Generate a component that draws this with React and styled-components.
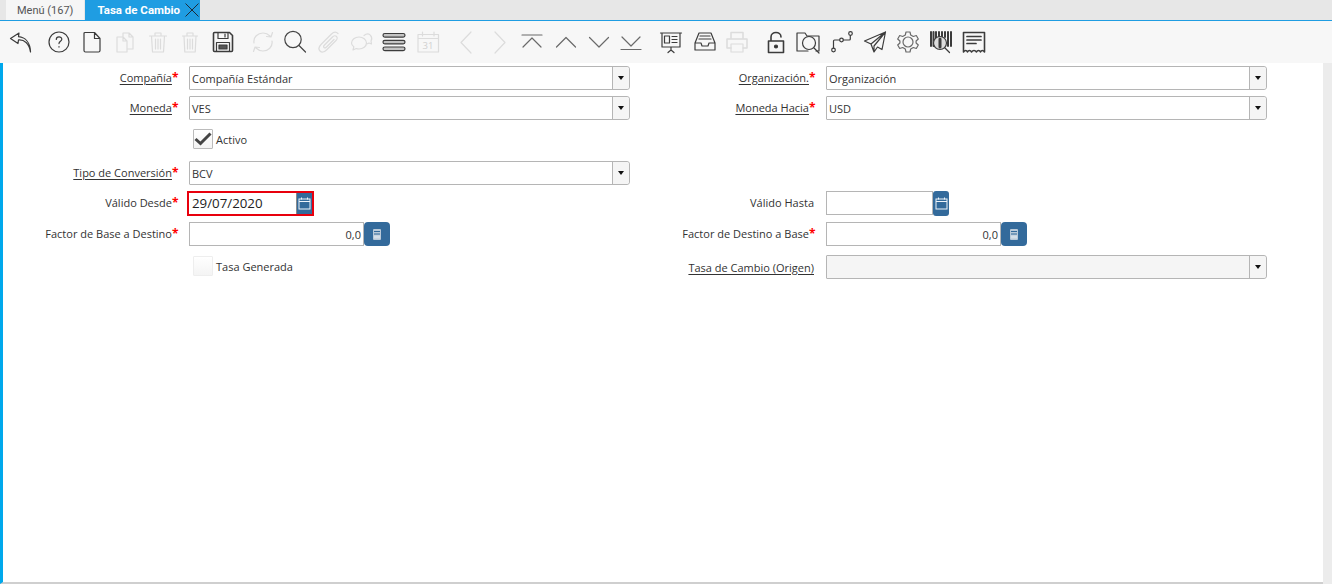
import styled, { createGlobalStyle } from 'styled-components';

const GlobalStyle = createGlobalStyle`
  html, body {
    margin: 0;
    height: 100%;
    background: #fff;
    overflow: hidden;
  }
  #root {
    height: 100%;
  }
`;

const Page = styled.div`
  width: 1332px;
  height: 584px;
  display: flex;
  flex-direction: column;
  font-family: 'Open Sans', 'Noto Sans', sans-serif;
  font-size: 11px;
  color: #333;
`;

const TabBar = styled.div`
  height: 20px;
  padding-left: 6px;
  display: flex;
  gap: 1px;
  background: #e7e7e7;
  border-bottom: 1px solid #1f9de2;
`;

const Tab = styled.div`
  height: 20px;
  display: flex;
  align-items: center;
  font-family: 'Roboto', sans-serif;
  font-size: ${props => (props.$active ? '11.5px' : '11px')};
  background: ${props => (props.$active ? '#1f9de2' : '#f6f6f6')};
  color: ${props => (props.$active ? '#fff' : '#555')};
  font-weight: ${props => (props.$active ? 700 : 400)};
  padding: ${props => (props.$active ? '0 0 0 12px' : '0 11px')};
`;

const CloseIcon = styled.svg`
  width: 16px;
  height: 16px;
  margin-left: 4px;
  fill: none;
  stroke: #1d2b38;
  stroke-width: 1;
`;

const Toolbar = styled.div`
  height: 42px;
  display: flex;
  align-items: center;
  padding-left: 9px;
  background: #f7f7f7;
`;

const ToolButton = styled.svg`
  width: 24px;
  height: 24px;
  flex: none;
  margin-left: ${props => props.$gap}px;
  fill: none;
  stroke: ${props => (props.$tone === 'off' ? '#dcdcdc' : props.$tone === 'nav' ? '#6a6a6a' : '#3c3c3c')};
  stroke-width: 1.2;
  stroke-linecap: round;
  stroke-linejoin: round;
`;

const Main = styled.div`
  flex: 1;
  display: flex;
`;

const Content = styled.div`
  flex: 1;
  border-left: 3px solid #00a8ec;
  border-bottom: 2px solid #cfcfcf;
  padding-top: 3px;
`;

const ScrollTrack = styled.div`
  width: 9px;
  background: #ececec;
`;

const Form = styled.div`
  display: grid;
  grid-template-columns: 174px 441px 172px 441px;
  grid-template-rows: 24px 24px 29px 24px 25px 24px 27px;
  gap: 6px 12px;
`;

const Label = styled.label`
  display: flex;
  justify-content: flex-end;
  align-items: center;
  height: 24px;
  align-self: ${props => (props.$end ? 'end' : 'start')};
  grid-column: ${props => props.$col};
  white-space: nowrap;
  line-height: 24px;
  padding: ${props => (props.$end ? '1px 0 0' : '0 0 1px')};
  box-sizing: border-box;

  span {
    text-decoration: ${props => (props.$link ? 'underline' : 'none')};
    text-underline-offset: 2px;
  }

  b {
    color: #f00;
    font-weight: 700;
    font-size: 12px;
    margin: 0 -1.5px 0 0;
  }
`;

const Combo = styled.div`
  height: 24px;
  box-sizing: border-box;
  display: flex;
  grid-column: ${props => props.$col};
  align-self: ${props => (props.$end ? 'end' : 'start')};
  background: ${props => (props.$off ? '#f5f5f5' : '#fff')};
  border: 1px solid #b5b5b5;
  border-radius: 1px 3px 3px 1px;
`;

const ComboValue = styled.div`
  flex: 1;
  padding-left: 2px;
  line-height: 23px;
`;

const ComboArrow = styled.div`
  width: 16px;
  background: #f5f5f5;
  border-left: 1px solid #b5b5b5;
  border-radius: 0 3px 3px 0;
  display: flex;
  align-items: center;
  justify-content: center;

  &::after {
    content: '';
    border-left: 3.5px solid transparent;
    border-right: 3.5px solid transparent;
    border-top: 4px solid #111;
  }
`;

const CheckField = styled.div`
  grid-column: 2;
  align-self: ${props => (props.$end ? 'end' : 'start')};
  margin: ${props => (props.$end ? '0 0 3px' : '3px 0 0')};
  padding-left: 4px;
  display: flex;
  align-items: center;
  gap: 3px;
  height: 20px;
`;

const CheckBox = styled.div`
  width: 20px;
  height: 20px;
  box-sizing: border-box;
  display: flex;
  align-items: center;
  justify-content: center;
  background: linear-gradient(#fff, #f4f4f4);
  border: 1px solid ${props => (props.$checked ? '#bbb' : '#eee')};
  border-radius: 1px;
`;

const FieldGroup = styled.div`
  grid-column: ${props => props.$col};
  display: flex;
`;

const Input = styled.div`
  box-sizing: border-box;
  height: 24px;
  width: ${props => props.$width}px;
  padding: 0 2px;
  line-height: 23px;
  text-align: ${props => (props.$right ? 'right' : 'left')};
  background: #fff;
  border: 1px solid #b5b5b5;
`;

const DateFrame = styled.div`
  box-sizing: border-box;
  width: 127px;
  height: 25px;
  margin-left: -2px;
  display: flex;
  border: 2px solid #e8000d;
`;

const DateText = styled.div`
  flex: 1;
  padding-left: 3px;
  font-size: 13.3px;
  line-height: 21px;
  color: #222;
`;

const FieldButton = styled.div`
  flex: none;
  width: ${props => props.$width}px;
  background: #336a9b;
  border-left: ${props => (props.$width < 16 ? '1px solid #8a8a8a' : 'none')};
  border-radius: ${props => props.$radius}px;
  display: flex;
  align-items: center;
  justify-content: center;
`;

const CalendarGlyph = () => (
  <svg width="13" height="13" viewBox="0 0 13 13" fill="none" stroke="#eef4fa" strokeWidth="1">
    <rect x="1" y="2" width="11" height="10" />
    <path d="M1 4.5h11M3.5 .5v2M9.5 .5v2" />
  </svg>
);

const CalculatorGlyph = () => (
  <svg width="12" height="13" viewBox="0 0 12 13">
    <rect x="2" y="1" width="8" height="11" rx="1" fill="#b9c9d8" />
    <path d="M3 3.5h6M3 6h6" stroke="#336a9b" strokeWidth="1" />
    <rect x="3" y="7.5" width="6" height="3" fill="#d5dfe8" />
  </svg>
);

const toolIcons = [
  { gap: 0, tone: 'on', d: <path d="M10 3 1.5 8.5 9 13.5l.5-3.6c5.5-.6 10.8 3.4 12 12.1-.2-9.5-5.2-14.6-12-15.3z" /> },
  { gap: 14, tone: 'on', d: <><circle cx="12" cy="12" r="10" /><path d="M9.3 9.5c0-3.4 5.5-3.4 5.5-.2 0 2-2.8 2.1-2.8 4.3M12 16.5v.6" /></> },
  { gap: 9, tone: 'on', d: <path d="M5 2.5h9.5l5.5 6v12a1.5 1.5 0 0 1-1.5 1.5H5.5A1.5 1.5 0 0 1 4 20.500v-17a1 1 0 0 1 1-1zM14.500 2.500v6H20" /> },
  { gap: 9, tone: 'off', d: <path d="M10 6.500V3h6l4 4v12h-5M16 3v4h4M4 7h6l4 4v11H4zM10 7v4h4" /> },
  { gap: 9, tone: 'off', d: <path d="M3.500 6h17M9 6V3h6v3M5.500 6l1 16h11l1-16M9.500 9v10M12 9v10M14.500 9v10" /> },
  { gap: 8, tone: 'off', d: <path d="M4.500 6h15M9 6V3h6v3M6 6l.8 16h10.400L18 6M9.500 9v10M12 9v10M14.500 9v10" /> },
  { gap: 9, tone: 'on', d: <><path d="M3.500 2.500h15l3 3v15a1 1 0 0 1-1 1h-17a1 1 0 0 1-1-1v-17a1 1 0 0 1 1-1z" strokeWidth="1.600" /><path d="M7 2.500v6h10v-6M14 4v3M5.500 21.500v-9h13v9" /><path d="M8 15h8v4H8z" fill="#555" /></> },
  { gap: 16, tone: 'off', d: <path d="M3 13C2 7 7 3 12 3c3 0 5 1 7 3M21.500 2.500 20 7l-4.500-.5M21 11c1 6-4 10-9 10-3 0-5-1-7-3M2.500 21.500 4 17l4.500.5" /> },
  { gap: 8, tone: 'nav', d: <><circle cx="10" cy="9.500" r="8.200" stroke="#444" /><path d="m16 15.500 6.500 6.500" stroke="#444" /></> },
  { gap: 10, tone: 'off', d: <path d="M21 3.500c-2-2-4.500-1.500-6.500.5L4 14.500c-2.500 2.500-2.500 5-1 6.500s4 1.500 6.500-1L19 10.500c1.500-1.500 1.500-3 .5-4s-2.500-1-4 .5L7.500 15c-1 1-1 2-.5 2.500s1.500.5 2.500-.5L17 9.500" /> },
  { gap: 9, tone: 'off', d: <path d="M14 5.500C20 1 23 8 21 11l.5 3-2.500-1c-1 .8-2 1-3 1M9 7c4 0 7.500 2.500 7.500 6s-3.500 6-7.500 6c-1 0-2-.2-2.800-.5L3 20l.8-3.200C2.500 15.800 1.500 14.500 1.500 13c0-3.500 3.500-6 7.500-6z" /> },
  { gap: 8, tone: 'on', d: <><rect x="1" y="3.500" width="22" height="3.600" rx="1.800" fill="#c4c4c4" /><rect x="1" y="10.300" width="22" height="3.600" rx="1.800" fill="#c4c4c4" /><rect x="1" y="17" width="22" height="3.600" rx="1.800" fill="#c4c4c4" /></> },
  { gap: 10, tone: 'off', d: <><path d="M2 4.500h20.500V22H2zM2 8.500h20.500M6.500 2v4M18 2v4" /><text x="12" y="19" fontSize="9.500" textAnchor="middle" fill="#d0d0d0" stroke="none" fontFamily="Open Sans">31</text></> },
  { gap: 15, tone: 'off', d: <path d="M16 2 6 12.500 16 23" /> },
  { gap: 8, tone: 'off', d: <path d="M8 2l10 10.500L8 23" /> },
  { gap: 9, tone: 'nav', d: <path d="M2 5h20M3 17 12 8l9 9" /> },
  { gap: 10, tone: 'nav', d: <path d="M2.500 17 12 7.500l9.500 9.500" /> },
  { gap: 9, tone: 'nav', d: <path d="M2.500 7.500 12 17l9.500-9.500" /> },
  { gap: 8, tone: 'nav', d: <path d="M3 7l9 9 9-9M2 19.500h20" /> },
  { gap: 16, tone: 'on', d: <><path d="M1.500 3h21M3 3h18v14H3zM5.500 6h5v7h-5zM13 6.500h5M13 9.500h5M13 12.500h5M12 17v3M12 20l-3 2.500M12 20l3 2.500" /></> },
  { gap: 10, tone: 'on', d: <path d="M6 3h12l4 10v7H2v-7zM2 13h6l1 3h6l1-3h6M7 6h10M6 9h12" /> },
  { gap: 8, tone: 'off', d: <><path d="M6 9V2.500h12V9M6 18H2V9h20v9h-4" strokeWidth="1.500" /><path d="M6 14h12v8H6z" /></> },
  { gap: 15, tone: 'on', d: <><path d="M7 11V7c0-6 10-6 10 0M4.500 11h15v11.500h-15z" strokeWidth="1.600" /><circle cx="12" cy="16.500" r="1.500" fill="#333" /></> },
  { gap: 8, tone: 'on', d: <><path d="M1 21V3h8l2 3h12v15h-3M1 21h11" /><circle cx="13" cy="13" r="6.500" /><path d="m18 18 5 5" /></> },
  { gap: 10, tone: 'on', d: <><circle cx="3.500" cy="20" r="1.800" /><circle cx="11.500" cy="10" r="1.800" /><circle cx="20.500" cy="3.500" r="1.800" /><path d="M3.500 18v-7a1 1 0 0 1 1-1h5M13.300 10h6a1 1 0 0 0 1-1V5.500" /></> },
  { gap: 9, tone: 'on', d: <path d="M22.500 2 1.500 11 8 14l3 8 3.500-5 4.500 2.500zM22.500 2 8 14M22.500 2 11 16v6" /> },
  { gap: 9, tone: 'nav', d: <><circle cx="12" cy="12" r="5" /><path d="M10 2h4l.7 3 2.600 1.500 3-1 2 3.500-2.200 2v2l2.200 2-2 3.500-3-1L14.700 19 14 22h-4l-.7-3-2.600-1.500-3 1-2-3.500 2.200-2v-2L1.700 9l2-3.500 3 1L9.300 5z" /></> },
  { gap: 9, tone: 'on', d: <><path d="M2 2v14M4.500 2v14M7 2v6M10 2v5M13 2v5M16 2v5M19 2v14M22 2v14" strokeWidth="2" /><circle cx="11" cy="13" r="6.500" fill="#ddd" /><path d="M11 9v8" strokeWidth="3" /><path d="m16 18 4.500 4.500" /></> },
  { gap: 9, tone: 'on', d: <><path d="M1.500 22V2.500h21V22c-1.500-2-3-2-4 0-1-2-3-2-4 0-1.500-2-3.500-2-5 0-1-2-3-2-4 0-1-2-2.500-2-4 0z" strokeWidth="1.600" /><path d="M5 6.500h14M5 10h14M5 13.500h9" strokeWidth="1.700" /></> },
];

function App() {
  return (
    <>
      <GlobalStyle />
      <Page>
        <TabBar>
          <Tab>Menú (167)</Tab>
          <Tab $active>
            Tasa de Cambio
            <CloseIcon viewBox="0 0 16 16">
              <path d="M1.500 1.500 14.500 14.500M14.500 1.500 1.500 14.500" />
            </CloseIcon>
          </Tab>
        </TabBar>
        <Toolbar>
          {toolIcons.map((icon, i) => (
            <ToolButton key={i} viewBox="0 0 24 24" $gap={icon.gap} $tone={icon.tone}>
              {icon.d}
            </ToolButton>
          ))}
        </Toolbar>
        <Main>
          <Content>
            <Form>
              <Label $col={1} $link><span>Compañía</span><b>*</b></Label>
              <Combo $col={2}><ComboValue>Compañía Estándar</ComboValue><ComboArrow /></Combo>
              <Label $col={3} $link><span>Organización.</span><b>*</b></Label>
              <Combo $col={4}><ComboValue>Organización</ComboValue><ComboArrow /></Combo>

              <Label $col={1} $link><span>Moneda</span><b>*</b></Label>
              <Combo $col={2}><ComboValue>VES</ComboValue><ComboArrow /></Combo>
              <Label $col={3} $link><span>Moneda Hacia</span><b>*</b></Label>
              <Combo $col={4}><ComboValue>USD</ComboValue><ComboArrow /></Combo>

              <CheckField>
                <CheckBox $checked>
                  <svg width="18" height="14" viewBox="0 0 18 14" fill="none" stroke="#444" strokeWidth="3">
                    <path d="M1.500 7 6.500 11.500 16.500 1.500" />
                  </svg>
                </CheckBox>
                Activo
              </CheckField>

              <Label $col={1} $link><span>Tipo de Conversión</span><b>*</b></Label>
              <Combo $col={2}><ComboValue>BCV</ComboValue><ComboArrow /></Combo>

              <Label $col={1}><span>Válido Desde</span><b>*</b></Label>
              <FieldGroup $col={2}>
                <DateFrame>
                  <DateText>29/07/2020</DateText>
                  <FieldButton $width={15} $radius={0}><CalendarGlyph /></FieldButton>
                </DateFrame>
              </FieldGroup>
              <Label $col={3}><span>Válido Hasta</span></Label>
              <FieldGroup $col={4}>
                <Input $width={107} />
                <FieldButton $width={16} $radius={3}><CalendarGlyph /></FieldButton>
              </FieldGroup>

              <Label $col={1}><span>Factor de Base a Destino</span><b>*</b></Label>
              <FieldGroup $col={2}>
                <Input $width={175} $right>0,0</Input>
                <FieldButton $width={26} $radius={4}><CalculatorGlyph /></FieldButton>
              </FieldGroup>
              <Label $col={3}><span>Factor de Destino a Base</span><b>*</b></Label>
              <FieldGroup $col={4}>
                <Input $width={175} $right>0,0</Input>
                <FieldButton $width={26} $radius={4}><CalculatorGlyph /></FieldButton>
              </FieldGroup>

              <CheckField $end>
                <CheckBox />
                Tasa Generada
              </CheckField>
              <Label $col={3} $end $link><span>Tasa de Cambio (Origen)</span></Label>
              <Combo $col={4} $end $off><ComboValue /><ComboArrow /></Combo>
            </Form>
          </Content>
          <ScrollTrack />
        </Main>
      </Page>
    </>
  );
}

export default App;
